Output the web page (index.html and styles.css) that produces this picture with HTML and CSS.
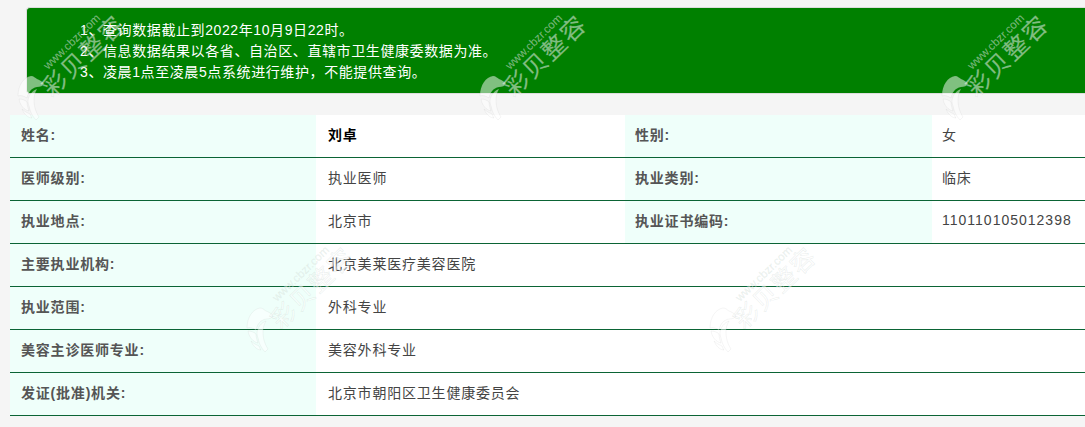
FILE: index.html
```html
<!DOCTYPE html>
<html lang="zh-CN">
<head>
<meta charset="utf-8">
<title>医师查询结果</title>
<link rel="stylesheet" href="styles.css">
</head>
<body>
<svg class="defs" width="0" height="0" aria-hidden="true">
  <symbol id="mark" viewBox="0 0 130 130">
    <g class="shell">
      <path d="M2 97C2 86 8 78 15 77c3 0 4 2 6 3 3 1 6 3 7 5-1 2-4 3-7 3-6 1-9 6-10 11-3-2-6-3-9-2z"/>
      <path d="M3 100c3 0 6 1 8 3 0 3 1 6 2 9-5-1-9-6-10-12z"/>
      <path d="M6 110c3 3 6 4 8 5 1 2 1 3 2 4-4 0-8-4-10-9z"/>
      <path d="M12 101c1-5 4-9 9-11-2 3-3 7-3 11 0 5 1 11 5 17l-3 3c-4-4-6-9-7-14-1-2-1-4-1-6z"/>
    </g>
    <text class="brand" transform="translate(36 99) rotate(-44)">彩贝整容</text>
    <text class="site" transform="translate(32 71) rotate(-44)">www.cbzr.com</text>
  </symbol>
</svg>

<main class="page">
  <section class="notice">
    <p>1、查询数据截止到2022年10月9日22时。</p>
    <p>2、信息数据结果以各省、自治区、直辖市卫生健康委数据为准。</p>
    <p>3、凌晨1点至凌晨5点系统进行维护，不能提供查询。</p>
  </section>

  <table class="info">
    <colgroup>
      <col class="c1"><col class="c2"><col class="c3"><col class="c4">
    </colgroup>
    <tbody>
      <tr>
        <th>姓名:</th><td class="name">刘卓</td>
        <th>性别:</th><td>女</td>
      </tr>
      <tr>
        <th>医师级别:</th><td>执业医师</td>
        <th>执业类别:</th><td>临床</td>
      </tr>
      <tr>
        <th>执业地点:</th><td>北京市</td>
        <th>执业证书编码:</th><td class="code">110110105012398</td>
      </tr>
      <tr><th>主要执业机构:</th><td colspan="3">北京美莱医疗美容医院</td></tr>
      <tr><th>执业范围:</th><td colspan="3">外科专业</td></tr>
      <tr><th>美容主诊医师专业:</th><td colspan="3">美容外科专业</td></tr>
      <tr><th>发证(批准)机关:</th><td colspan="3">北京市朝阳区卫生健康委员会</td></tr>
    </tbody>
  </table>
</main>

<svg class="wm wm-a1" aria-hidden="true"><use href="#mark"/></svg>
<svg class="wm wm-a2" aria-hidden="true"><use href="#mark"/></svg>
<svg class="wm wm-a3" aria-hidden="true"><use href="#mark"/></svg>
<svg class="wm wm-b1" aria-hidden="true"><use href="#mark"/></svg>
<svg class="wm wm-b2" aria-hidden="true"><use href="#mark"/></svg>
</body>
</html>
```

FILE: styles.css
```css
* { box-sizing: border-box; }

html, body {
  margin: 0;
  height: 427px;
  overflow: hidden;
  background: #f5f5f5;
}

body {
  position: relative;
  font-family: "Liberation Sans", "Noto Sans CJK SC", sans-serif;
  font-size: 14px;
}

.defs { position: absolute; }

.page { padding: 7px 0 0 10px; }

.notice {
  margin: 0 -10px 0 16px;
  height: 87px;
  padding: 12px 0 0 53px;
  background: #008000;
  border: 1px solid #ddd;
  border-right: 0;
  border-radius: 4px 0 0 4px;
  color: #fff;
  line-height: 21px;
  letter-spacing: 0.6px;
}

.notice p { margin: 0; }

.info {
  margin-top: 21px;
  width: 1075px;
  table-layout: fixed;
  border-collapse: collapse;
  letter-spacing: 0.8px;
}

.c1 { width: 306px; }
.c2 { width: 309px; }
.c3 { width: 307px; }
.c4 { width: 153px; }

.info tr { height: 43px; border-bottom: 1px solid #0b6435; }

.info tr:first-child { height: 42px; }

.info th,
.info td { padding: 0 10px 3px; text-align: left; white-space: nowrap; }

.info th:first-child { padding-left: 11px; }

.info th:first-child + td { padding-left: 12px; }

.info th {
  background: #effffa;
  color: #555;
  font-weight: 700;
}

.info td { background: #fff; color: #444; }

.info td.name { color: #000; font-weight: 700; }

.info td.code { letter-spacing: 1px; }

.wm {
  position: absolute;
  width: 130px;
  height: 130px;
  pointer-events: none;
}

.wm-a1 { left: 16px; top: -1px; }
.wm-a2 { left: 478px; top: -1px; }
.wm-a3 { left: 940px; top: -1px; }
.wm-b1 { left: 245px; top: 231px; }
.wm-b2 { left: 708px; top: 231px; }

.shell path { fill: rgba(255, 255, 255, 0.5); stroke: rgba(120, 120, 120, 0.1); stroke-width: 0.7px; }

.brand {
  font-family: "Noto Sans CJK SC", sans-serif;
  font-size: 24px;
  font-weight: 400;
  letter-spacing: 2px;
  fill: rgba(255, 255, 255, 0.5);
  stroke: rgba(150, 170, 160, 0.2);
  stroke-width: 0.6px;
}

.site {
  font-family: "Liberation Sans", sans-serif;
  font-size: 11.5px;
  fill: rgba(225, 235, 230, 0.55);
  stroke: rgba(150, 170, 160, 0.15);
  stroke-width: 0.3px;
}
```
